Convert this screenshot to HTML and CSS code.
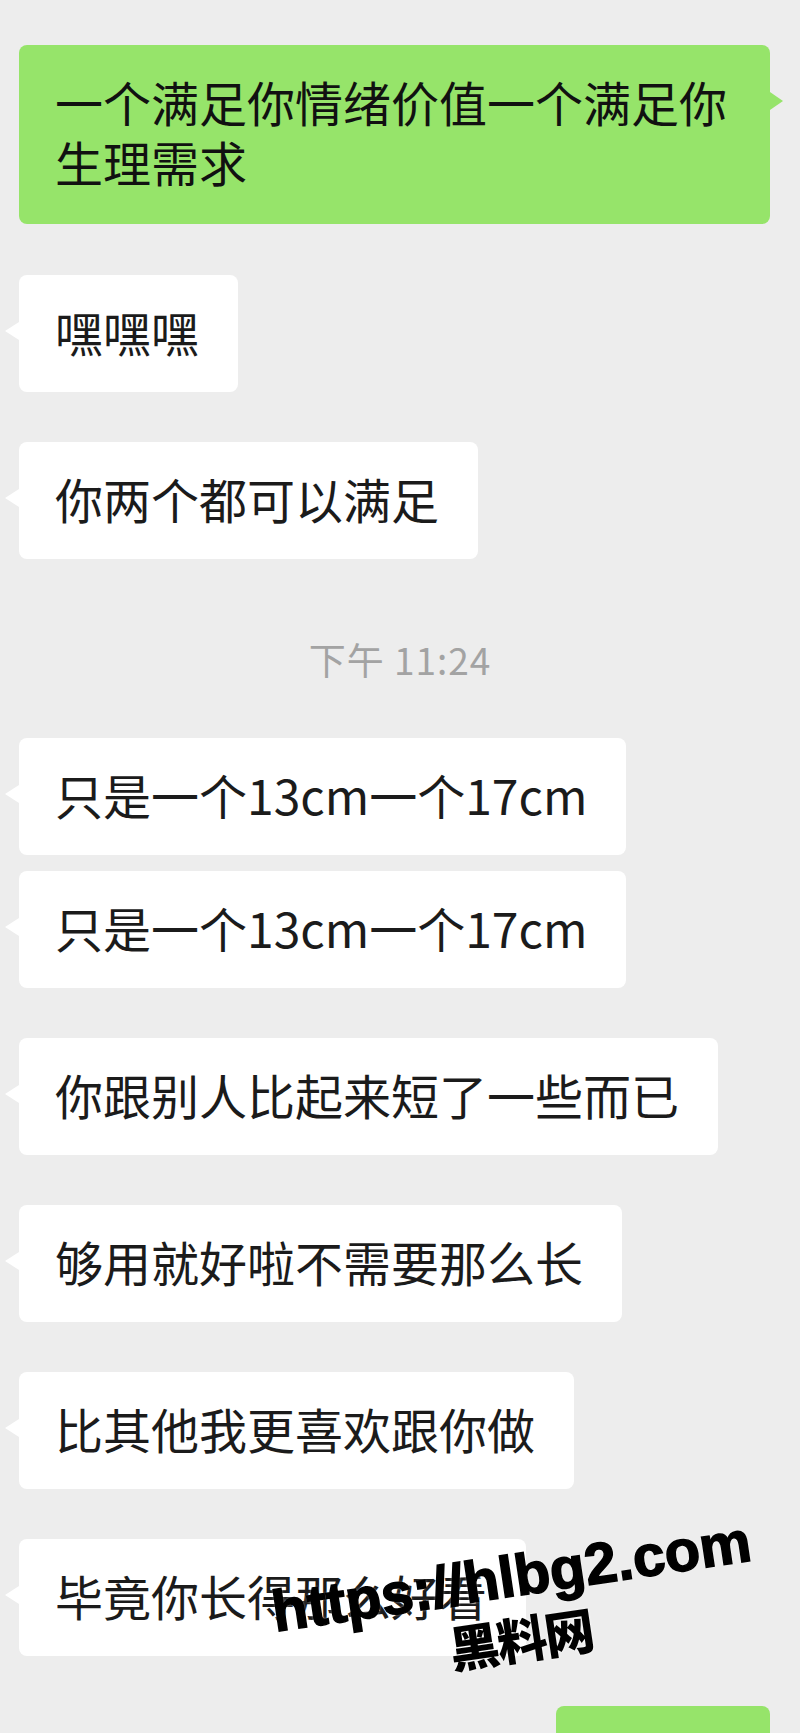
FILE: index.html
```html
<!DOCTYPE html>
<html lang="zh-CN">
<head>
    <meta charset="UTF-8">
    <meta name="viewport" content="width=device-width, initial-scale=1.0">
    <title>聊天记录</title>
    <link rel="stylesheet" href="styles.css">
</head>
<body>
    <!-- Переписка -->
    <div class="chat">
        <div class="row row-me row-first">
            <div class="bubble bubble-me">一个满足你情绪价值一个满足你生理需求</div>
        </div>
        <div class="row">
            <div class="bubble">嘿嘿嘿</div>
        </div>
        <div class="row">
            <div class="bubble">你两个都可以满足</div>
        </div>

        <div class="time">下午 11:24</div>

        <div class="row row-tight">
            <div class="bubble">只是一个13cm一个17cm</div>
        </div>
        <div class="row">
            <div class="bubble">只是一个13cm一个17cm</div>
        </div>
        <div class="row">
            <div class="bubble">你跟别人比起来短了一些而已</div>
        </div>
        <div class="row">
            <div class="bubble">够用就好啦不需要那么长</div>
        </div>
        <div class="row">
            <div class="bubble">比其他我更喜欢跟你做</div>
        </div>
        <div class="row">
            <div class="bubble">毕竟你长得那么好看</div>
        </div>
        <div class="row row-me">
            <div class="bubble bubble-me bubble-cut">&nbsp;</div>
        </div>
    </div>

    <!-- Водяной знак поверх переписки -->
    <div class="watermark">
        <div class="wm-url">https://hlbg2.com</div>
        <div class="wm-name">黑料网</div>
    </div>
</body>
</html>
```

FILE: styles.css
```css
/* Общие стили */
body {
    margin: 0;
    background: #ededed;
    font-family: "Noto Sans CJK SC", sans-serif;
    position: relative;
    overflow: hidden;
}

.chat {
    display: flex;
    flex-direction: column;
    padding-top: 45px;
}

.row {
    display: flex;
    padding: 0 30px 0 19px;
    margin-bottom: 50px;
}

.row-me {
    justify-content: flex-end;
}

.row-first {
    margin-bottom: 51px;
}

.row-tight {
    margin-bottom: 16px;
}

/* Пузырь сообщения */
.bubble {
    position: relative;
    background: #fff;
    color: #1b1b1b;
    font-size: 48px;
    line-height: 60px;
    padding: 26px 39px 31px 36px;
    border-radius: 8px;
    box-sizing: border-box;
}

.bubble::before {
    content: "";
    position: absolute;
    top: 47px;
    left: -14px;
    border-style: solid;
    border-width: 9px 14px 9px 0;
    border-color: transparent #fff transparent transparent;
}

.bubble-me {
    background: #96e46a;
    color: #111;
    padding-bottom: 33px;
}

.bubble-me::before {
    left: auto;
    right: -13px;
    border-width: 9px 0 9px 13px;
    border-color: transparent transparent transparent #96e46a;
}

.bubble-cut {
    width: 214px;
}

/* Время */
.time {
    text-align: center;
    font-size: 37px;
    line-height: 40px;
    letter-spacing: 1px;
    color: #a3a3a3;
    margin: 30px 0 59px;
}

/* Водяной знак */
.watermark {
    position: absolute;
    left: 266px;
    top: 1546px;
    width: 500px;
    text-align: center;
    color: #000;
    transform: rotate(-8.5deg);
    text-shadow: 0 0 3px rgba(255, 255, 255, 0.9);
}

.wm-url {
    font-family: "Liberation Sans", sans-serif;
    font-weight: bold;
    font-size: 58px;
    line-height: 60px;
    -webkit-text-stroke: 1.5px #000;
}

.wm-name {
    font-family: "Noto Sans CJK SC", sans-serif;
    font-weight: 900;
    font-size: 50px;
    line-height: 62px;
    letter-spacing: -2px;
}
```
